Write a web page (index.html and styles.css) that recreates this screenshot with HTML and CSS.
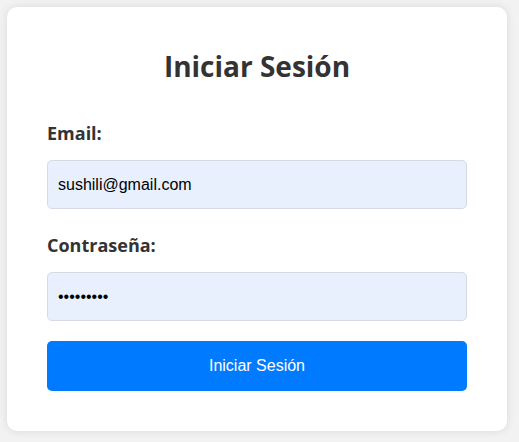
FILE: index.html
```html
<!DOCTYPE html>
<html lang="es">

<head>
    <meta charset="UTF-8">
    <meta name="viewport" content="width=device-width, initial-scale=1.0">
    <title>Iniciar Sesión</title>
    <link rel="stylesheet" href="styles.css">
</head>

<body>
    <div class="login-container">
        <h2>Iniciar Sesión</h2>
        <form class="login-form" onsubmit="return false;">
            <div class="input-group">
                <label for="email">Email:</label>
                <input type="email" id="email" name="email" value="sushili@gmail.com" required>
            </div>
            <div class="input-group">
                <label for="password">Contraseña:</label>
                <input type="password" id="password" name="password" value="123456789" required>
            </div>
            <button type="submit" class="login-btn">Iniciar Sesión</button>
        </form>
    </div>
</body>

</html>
```

FILE: styles.css
```css
body {
    font-family: "Open Sans", "Noto Sans", sans-serif;
    margin: 0;
    padding: 7px;
    background-color: #f2f2f2;
}

.login-container {
    background-color: white;
    padding: 40px;
    border-radius: 10px;
    box-shadow: 0 0 10px rgba(0, 0, 0, 0.1);
    width: 420px;
}

h2 {
    text-align: center;
    color: #333;
    font-size: 28px;
    margin: 0 0 36px;
}

.input-group + .input-group {
    margin-top: 24px;
}

label {
    display: block;
    margin-bottom: 15px;
    font-weight: bold;
    font-size: 18px;
    color: #333;
}

input {
    width: 100%;
    height: 49px;
    padding: 0 10px;
    border: 1px solid #d6dbe3;
    border-radius: 5px;
    background-color: #e8f0fe;
    font-family: "Liberation Sans", Arial, sans-serif;
    font-size: 16px;
    color: #000;
    box-sizing: border-box;
}

.login-btn {
    display: block;
    width: 100%;
    height: 50px;
    margin-top: 20px;
    border: none;
    border-radius: 5px;
    background-color: #007bff;
    color: white;
    font-family: "Liberation Sans", Arial, sans-serif;
    font-size: 16px;
    cursor: pointer;
}
```
